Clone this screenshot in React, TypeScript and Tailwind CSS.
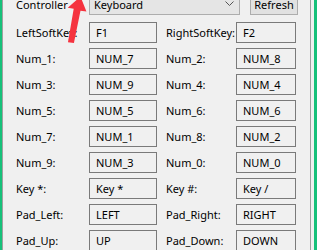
import React from "react";

const rows: [string, string, string, string][] = [
  ["LeftSoftKey:", "F1", "RightSoftKey:", "F2"],
  ["Num_1:", "NUM_7", "Num_2:", "NUM_8"],
  ["Num_3:", "NUM_9", "Num_4:", "NUM_4"],
  ["Num_5:", "NUM_5", "Num_6:", "NUM_6"],
  ["Num_7:", "NUM_1", "Num_8:", "NUM_2"],
  ["Num_9:", "NUM_3", "Num_0:", "NUM_0"],
  ["Key *:", "Key *", "Key #:", "Key /"],
  ["Pad_Left:", "LEFT", "Pad_Right:", "RIGHT"],
  ["Pad_Up:", "UP", "Pad_Down:", "DOWN"],
];

const KeyBox = ({ value }: { value: string }) => (
  <div className="flex h-[21px] items-center border border-[#7a7a7a] bg-[#f0f0f0] pl-[6px] text-black">
    {value}
  </div>
);

export default function App() {
  return (
    <div
      className="relative flex h-[250px] w-[318px] overflow-hidden bg-white text-[11px] leading-none text-black"
      style={{ fontFamily: '"Noto Sans", "Open Sans", sans-serif' }}
    >
      <div className="w-[2px] bg-[#17c17a]" />
      <div className="w-px bg-[#a0a0a0]" />
      <div className="flex w-[307px] flex-col bg-[#f0f0f0] pl-[13px]">
        <div className="mt-[-6px] flex h-[21px] items-center">
          <div className="w-[73px]">Controller</div>
          <div className="flex h-[21px] w-[151px] items-center justify-between border border-[#adadad] bg-[#e5e5e5] pl-[4px] pr-[5px]">
            <span>Keyboard</span>
            <svg width="9" height="5" viewBox="0 0 9 5" className="mt-[-2px]">
              <path d="M0.5 0.5 L4.5 4.5 L8.5 0.5" fill="none" stroke="#555" strokeWidth="1" />
            </svg>
          </div>
          <div className="ml-[10px] flex h-[21px] w-[48px] items-center justify-center border border-[#adadad] bg-[#e1e1e1]">
            Refresh
          </div>
        </div>
        <div className="mt-[7px] grid grid-cols-[73px_68px_79px_60px] gap-y-[5px]">
          {rows.map(([l1, v1, l2, v2]) => (
            <React.Fragment key={l1}>
              <div className="flex h-[21px] items-center">{l1}</div>
              <KeyBox value={v1} />
              <div className="ml-[9px] flex h-[21px] items-center">{l2}</div>
              <KeyBox value={v2} />
            </React.Fragment>
          ))}
        </div>
      </div>
      <div className="w-px bg-[#a0a0a0]" />
      <div className="w-[3px] bg-[#f0f0f0]" />
      <div className="w-[3px] bg-[#17c17a]" />
      <div className="w-px bg-white" />

      <svg className="absolute left-[60px] top-[-4px]" width="30" height="50" viewBox="0 0 30 50">
        <polygon
          points="11,47 17,47 19,14 25,14 17,0 6,13 12,13"
          fill="#f5333f"
          transform="rotate(8 15 25)"
        />
      </svg>
    </div>
  );
}
